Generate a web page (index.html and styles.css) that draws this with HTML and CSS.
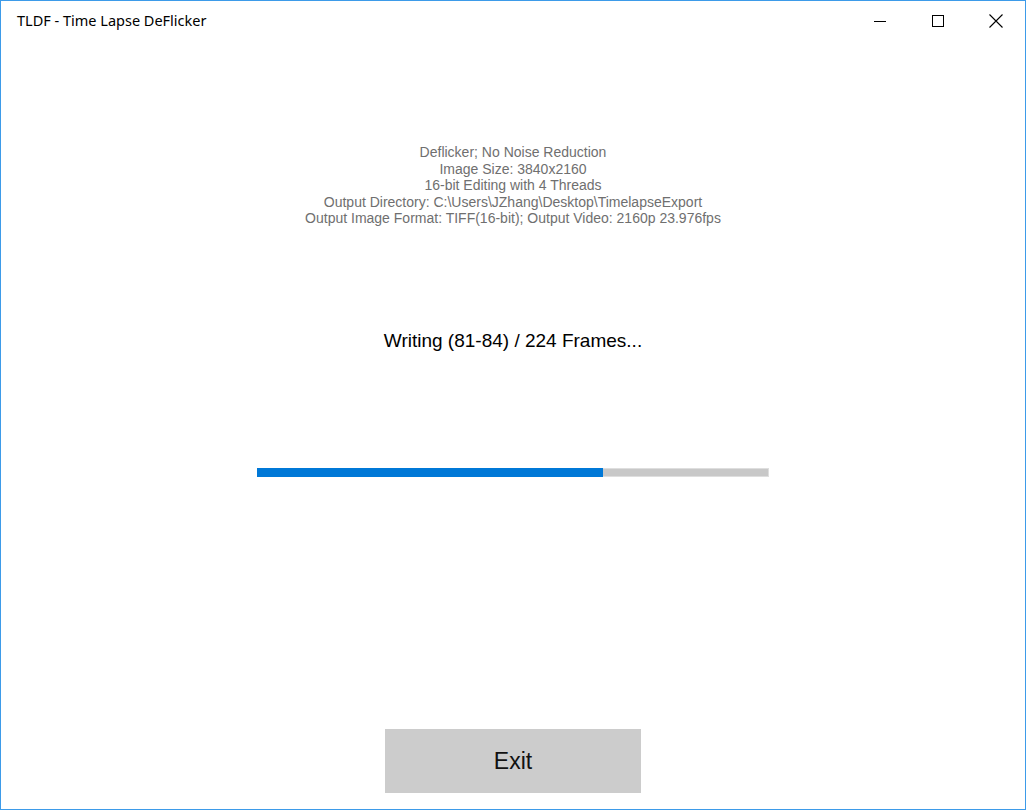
FILE: index.html
```html
<!DOCTYPE html>
<html lang="en">
<head>
    <meta charset="UTF-8">
    <title>TLDF - Time Lapse DeFlicker</title>
    <link rel="stylesheet" href="styles.css">
</head>
<body>
    <div class="window">
        <div class="titlebar">
            <span class="title">TLDF - Time Lapse DeFlicker</span>
            <div class="caption-buttons">
                <div class="caption-btn">
                    <svg width="12" height="12" viewBox="0 0 12 12"><path d="M0 6.5h12" stroke="#000" stroke-width="1" fill="none"/></svg>
                </div>
                <div class="caption-btn">
                    <svg width="12" height="12" viewBox="0 0 12 12"><rect x="0.5" y="0.5" width="11" height="11" stroke="#000" stroke-width="1" fill="none"/></svg>
                </div>
                <div class="caption-btn">
                    <svg width="14" height="14" viewBox="0 0 14 14"><path d="M0.5 0.5L13.5 13.5M13.5 0.5L0.5 13.5" stroke="#000" stroke-width="1.1" fill="none"/></svg>
                </div>
            </div>
        </div>

        <div class="content">
            <div class="settings">
                <div>Deflicker; No Noise Reduction</div>
                <div>Image Size: 3840x2160</div>
                <div>16-bit Editing with 4 Threads</div>
                <div>Output Directory: C:\Users\JZhang\Desktop\TimelapseExport</div>
                <div>Output Image Format: TIFF(16-bit); Output Video: 2160p 23.976fps</div>
            </div>

            <div class="status">Writing (81-84) / 224 Frames...</div>

            <div class="progress">
                <div class="progress-fill" style="width: 67.8%"></div>
            </div>

            <button class="exit-btn">Exit</button>
        </div>
    </div>
</body>
</html>
```

FILE: styles.css
```css
html, body {
    margin: 0;
    padding: 0;
    background: #fff;
}

.window {
    width: 1026px;
    height: 810px;
    box-sizing: border-box;
    border: 1px solid #3d9be9;
    display: flex;
    flex-direction: column;
    background: #fff;
}

.titlebar {
    height: 39px;
    display: flex;
    align-items: center;
    justify-content: space-between;
}

.title {
    font-family: "Noto Sans", "DejaVu Sans", sans-serif;
    font-size: 14.5px;
    color: #000;
    padding-left: 16px;
    margin-top: -2px;
}

.caption-buttons {
    display: flex;
    height: 100%;
}

.caption-btn {
    width: 58px;
    height: 100%;
    display: flex;
    align-items: center;
    justify-content: center;
}

.content {
    flex: 1;
    display: flex;
    flex-direction: column;
    align-items: center;
    font-family: "Liberation Sans", Arial, sans-serif;
}

.settings {
    margin-top: 104px;
    text-align: center;
    font-size: 14px;
    line-height: 16.5px;
    color: #6f6f6f;
}

.status {
    margin-top: 102px;
    font-size: 19px;
    line-height: 24px;
    color: #000;
}

.progress {
    margin-top: 115px;
    width: 512px;
    height: 9px;
    background: #c8c8c8;
    box-sizing: border-box;
    border: 1px solid #dedede;
}

.progress-fill {
    height: 100%;
    background: #0078d7;
    margin: -1px 0 0 -1px;
    padding-bottom: 2px;
}

.exit-btn {
    margin-top: auto;
    margin-bottom: 16px;
    width: 256px;
    height: 64px;
    border: none;
    background: #cccccc;
    font-family: "Liberation Sans", Arial, sans-serif;
    font-size: 23px;
    color: #111;
}
```
